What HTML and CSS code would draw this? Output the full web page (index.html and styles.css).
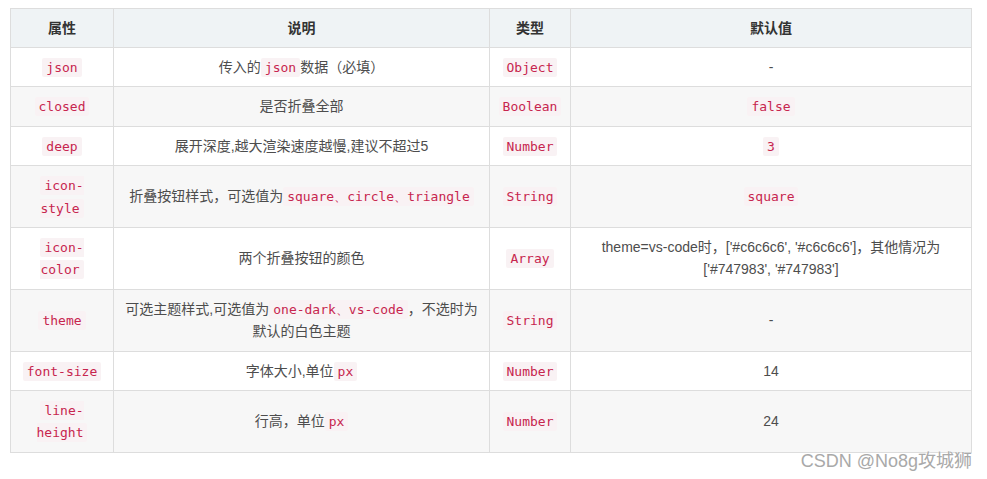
FILE: index.html
```html
<!DOCTYPE html>
<html lang="zh">
<head>
<meta charset="utf-8">
<title>props</title>
<link rel="stylesheet" href="styles.css">
</head>
<body>
<div class="page">
<table class="props">
  <colgroup>
    <col class="c1"><col class="c2"><col class="c3"><col class="c4">
  </colgroup>
  <thead>
    <tr><th>属性</th><th>说明</th><th>类型</th><th>默认值</th></tr>
  </thead>
  <tbody>
    <tr><td><code>json</code></td><td>传入的<code>json</code>数据（必填）</td><td><code>Object</code></td><td>-</td></tr>
    <tr><td><code>closed</code></td><td>是否折叠全部</td><td><code>Boolean</code></td><td><code>false</code></td></tr>
    <tr><td><code>deep</code></td><td>展开深度,越大渲染速度越慢,建议不超过5</td><td><code>Number</code></td><td><code>3</code></td></tr>
    <tr><td><code>icon-<br>style</code></td><td>折叠按钮样式，可选值为<code>square、circle、triangle</code></td><td><code>String</code></td><td><code>square</code></td></tr>
    <tr><td><code>icon-<br>color</code></td><td>两个折叠按钮的颜色</td><td><code>Array</code></td><td>theme=vs-code时，['#c6c6c6', '#c6c6c6']，其他情况为<br>['#747983', '#747983']</td></tr>
    <tr><td><code>theme</code></td><td>可选主题样式,可选值为<code>one-dark、vs-code</code>，不选时为<br>默认的白色主题</td><td><code>String</code></td><td>-</td></tr>
    <tr><td><code>font-size</code></td><td>字体大小,单位<code>px</code></td><td><code>Number</code></td><td>14</td></tr>
    <tr><td><code>line-<br>height</code></td><td>行高，单位<code>px</code></td><td><code>Number</code></td><td>24</td></tr>
  </tbody>
</table>
<div class="watermark">CSDN @No8g攻城狮</div>
</div>
</body>
</html>
```
FILE: styles.css
```css
html, body {
  margin: 0;
  padding: 0;
  background: #ffffff;
}
.page {
  position: relative;
  padding: 8px 0 0 10px;
  width: 987px;
  height: 479px;
  box-sizing: border-box;
  font-family: "Liberation Sans", Arial, "Noto Sans CJK SC", sans-serif;
  font-size: 14px;
  color: #4d4d4d;
}
.props {
  border-collapse: collapse;
  table-layout: fixed;
  width: 961px;
}
.c1 { width: 103px; }
.c2 { width: 376px; }
.c3 { width: 81px; }
.c4 { width: 401px; }
.props th, .props td {
  border: 1px solid #dddddd;
  padding: 8px 6px;
  line-height: 22.4px;
  text-align: center;
  vertical-align: middle;
  white-space: nowrap;
}
.props th {
  background: #eff3f5;
  color: #333333;
  font-weight: bold;
  line-height: 22px;
}
.props tbody tr:nth-child(even) td {
  background: #f7f7f7;
}
.props tbody tr:nth-child(odd) td {
  background: #ffffff;
}
code {
  font-family: "DejaVu Sans Mono", "Liberation Mono", monospace;
  font-size: 13px;
  line-height: 16px;
  color: #c7254e;
  background: #f9f2f4;
  padding: 2px 4px;
  border-radius: 2px;
}
.watermark {
  position: absolute;
  right: 15px;
  top: 446px;
  font-size: 18px;
  color: #a9a9a9;
  text-shadow: 0 0 2px #ffffff;
  font-family: "Liberation Sans", Arial, "Noto Sans CJK SC", sans-serif;
  white-space: nowrap;
}
```
